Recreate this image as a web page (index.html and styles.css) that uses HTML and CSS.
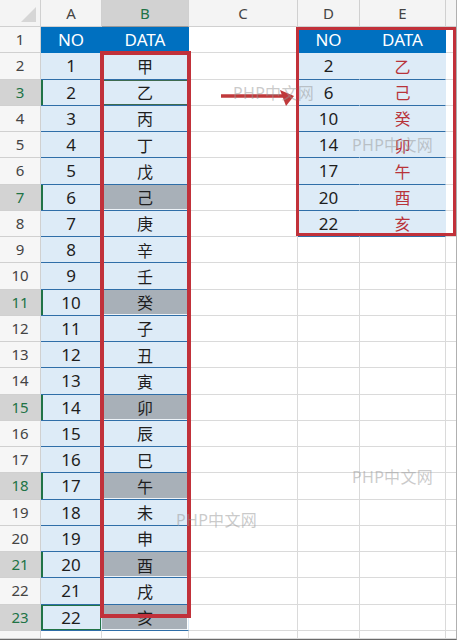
FILE: index.html
```html
<!DOCTYPE html>
<html>
<head>
<meta charset="utf-8">
<link rel="stylesheet" href="styles.css">
</head>
<body>
<div class="frame">
<div class="sheet">
<div class="c corner"><span class="tri"></span></div><div class="c ch">A</div><div class="c ch csel">B</div><div class="c ch">C</div><div class="c ch">D</div><div class="c ch">E</div><div class="c ch"></div>
<div class="c rh">1</div><div class="c hdr">NO</div><div class="c hdr">DATA</div><div class="c"></div><div class="c hdr">NO</div><div class="c hdr">DATA</div><div class="c"></div>
<div class="c rh">2</div><div class="c tb">1</div><div class="c tb cj">甲</div><div class="c"></div><div class="c tb">2</div><div class="c tb cj red">乙</div><div class="c"></div>
<div class="c rh rsel">3</div><div class="c tb mk">2</div><div class="c tb cj active">乙</div><div class="c"></div><div class="c tb">6</div><div class="c tb cj red">己</div><div class="c"></div>
<div class="c rh">4</div><div class="c tb">3</div><div class="c tb cj">丙</div><div class="c"></div><div class="c tb">10</div><div class="c tb cj red">癸</div><div class="c"></div>
<div class="c rh">5</div><div class="c tb">4</div><div class="c tb cj">丁</div><div class="c"></div><div class="c tb">14</div><div class="c tb cj red">卯</div><div class="c"></div>
<div class="c rh">6</div><div class="c tb">5</div><div class="c tb cj">戊</div><div class="c"></div><div class="c tb">17</div><div class="c tb cj red">午</div><div class="c"></div>
<div class="c rh rsel">7</div><div class="c tb mk">6</div><div class="c tb cj gray">己</div><div class="c"></div><div class="c tb">20</div><div class="c tb cj red">酉</div><div class="c"></div>
<div class="c rh">8</div><div class="c tb">7</div><div class="c tb cj">庚</div><div class="c"></div><div class="c tb">22</div><div class="c tb cj red">亥</div><div class="c"></div>
<div class="c rh">9</div><div class="c tb">8</div><div class="c tb cj">辛</div><div class="c"></div><div class="c"></div><div class="c"></div><div class="c"></div>
<div class="c rh">10</div><div class="c tb">9</div><div class="c tb cj">壬</div><div class="c"></div><div class="c"></div><div class="c"></div><div class="c"></div>
<div class="c rh rsel">11</div><div class="c tb mk">10</div><div class="c tb cj gray">癸</div><div class="c"></div><div class="c"></div><div class="c"></div><div class="c"></div>
<div class="c rh">12</div><div class="c tb">11</div><div class="c tb cj">子</div><div class="c"></div><div class="c"></div><div class="c"></div><div class="c"></div>
<div class="c rh">13</div><div class="c tb">12</div><div class="c tb cj">丑</div><div class="c"></div><div class="c"></div><div class="c"></div><div class="c"></div>
<div class="c rh">14</div><div class="c tb">13</div><div class="c tb cj">寅</div><div class="c"></div><div class="c"></div><div class="c"></div><div class="c"></div>
<div class="c rh rsel">15</div><div class="c tb mk">14</div><div class="c tb cj gray">卯</div><div class="c"></div><div class="c"></div><div class="c"></div><div class="c"></div>
<div class="c rh">16</div><div class="c tb">15</div><div class="c tb cj">辰</div><div class="c"></div><div class="c"></div><div class="c"></div><div class="c"></div>
<div class="c rh">17</div><div class="c tb">16</div><div class="c tb cj">巳</div><div class="c"></div><div class="c"></div><div class="c"></div><div class="c"></div>
<div class="c rh rsel">18</div><div class="c tb mk">17</div><div class="c tb cj gray">午</div><div class="c"></div><div class="c"></div><div class="c"></div><div class="c"></div>
<div class="c rh">19</div><div class="c tb">18</div><div class="c tb cj">未</div><div class="c"></div><div class="c"></div><div class="c"></div><div class="c"></div>
<div class="c rh">20</div><div class="c tb">19</div><div class="c tb cj">申</div><div class="c"></div><div class="c"></div><div class="c"></div><div class="c"></div>
<div class="c rh rsel">21</div><div class="c tb mk">20</div><div class="c tb cj gray">酉</div><div class="c"></div><div class="c"></div><div class="c"></div><div class="c"></div>
<div class="c rh">22</div><div class="c tb">21</div><div class="c tb cj">戌</div><div class="c"></div><div class="c"></div><div class="c"></div><div class="c"></div>
<div class="c rh rsel">23</div><div class="c tb mk last">22</div><div class="c tb cj gray">亥</div><div class="c"></div><div class="c"></div><div class="c"></div><div class="c"></div>
<div class="c rh"></div><div class="c"></div><div class="c"></div><div class="c"></div><div class="c"></div><div class="c"></div><div class="c"></div>
</div>
<div class="box box-b"></div>
<div class="box box-de"></div>
<svg class="arrow" width="80" height="24" viewBox="0 0 80 24">
<line x1="3" y1="10" x2="68" y2="10" stroke="#c0393b" stroke-width="3.5"/>
<polygon points="62,4 76,10 68,20" fill="#c0393b"/>
</svg>
<span class="wm wm1">PHP中文网</span>
<span class="wm wm2">PHP中文网</span>
<span class="wm wm3">PHP中文网</span>
<span class="wm wm4">PHP中文网</span>
</div>
</body>
</html>
```
FILE: styles.css
```css
html, body {
  margin: 0;
  padding: 0;
  background: #fff;
}
.frame {
  position: relative;
  width: 457px;
  height: 640px;
  overflow: hidden;
  box-sizing: border-box;
  border-bottom: 1px solid #6a6a6a;
  border-right: 1px solid #b0b0b0;
  font-family: "Noto Sans", "Noto Sans CJK SC", sans-serif;
}
.sheet {
  display: grid;
  grid-template-columns: 41px 61px 87px 109px 62px 86px 11px;
  grid-template-rows: 27px repeat(23, 26.25px) 1fr;
  height: 639px;
}
.c {
  box-sizing: border-box;
  border-right: 1px solid #dadada;
  border-bottom: 1px solid #dadada;
  display: flex;
  align-items: center;
  justify-content: center;
  font-size: 17px;
  color: #1e1e1e;
  line-height: 1;
  overflow: hidden;
}
.corner {
  background: #f4f4f4;
  border-color: #d0d0d0;
  position: relative;
}
.tri {
  position: absolute;
  right: 4px;
  bottom: 4px;
  width: 0;
  height: 0;
  border-left: 15px solid transparent;
  border-bottom: 15px solid #d6d6d6;
}
.ch {
  background: #f4f4f4;
  border-color: #d0d0d0;
  font-size: 15px;
  color: #444;
  padding-top: 1px;
}
.csel {
  background: #d2d2d2;
  color: #217346;
  border-bottom: 1px solid #9a9a9a;
}
.rh {
  background: #f6f6f6;
  border-color: #d0d0d0;
  font-size: 15px;
  color: #444;
}
.rsel {
  background: #d3d3d3;
  color: #217346;
}
.hdr {
  background: #0070c0;
  color: #fff;
  border-right-color: #0070c0;
  border-bottom-color: #0070c0;
}
.tb {
  background: #ddebf7;
  border-right-color: #ddebf7;
  border-bottom: 1px solid #2f6ea8;
}
.cj {
  font-family: "Noto Sans CJK SC", sans-serif;
  font-size: 16px;
}
.red {
  color: #b8333a;
}
.gray {
  background: #a8b0b8;
  box-shadow: inset -1px 0 0 #fff, inset 0 -1px 0 #eef3f8;
}
.active {
  box-shadow: inset 0 0 0 1px #3e6b4f;
}
.mk {
  box-shadow: inset 2px 0 0 #217346;
}
.last {
  box-shadow: inset 2px 0 0 #217346, inset 0 0 0 1px #217346;
}
.box {
  position: absolute;
  box-sizing: border-box;
  border: 4px solid #c1313a;
}
.box-b {
  left: 100px;
  top: 51px;
  width: 91px;
  height: 567px;
}
.box-de {
  left: 296px;
  top: 27px;
  width: 160px;
  height: 209px;
  border-width: 3.5px;
}
.arrow {
  position: absolute;
  left: 218px;
  top: 86px;
}
.wm {
  position: absolute;
  font-family: "Noto Sans", "Noto Sans CJK SC", sans-serif;
  font-size: 16px;
  color: rgba(150, 150, 150, 0.5);
  white-space: nowrap;
  letter-spacing: 0.3px;
}
.wm1 { left: 233px; top: 80px; }
.wm2 { left: 352px; top: 132px; }
.wm3 { left: 352px; top: 464px; }
.wm4 { left: 176px; top: 507px; }
```
